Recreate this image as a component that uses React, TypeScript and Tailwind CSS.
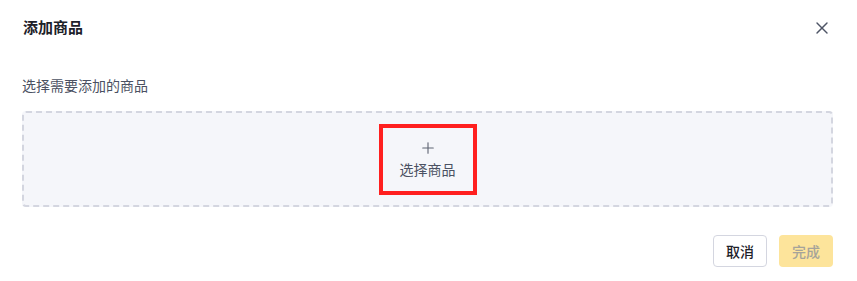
import { X, Plus } from "lucide-react"

const font = { fontFamily: '"Noto Sans CJK SC", "Noto Sans", sans-serif' }

export default function App() {
  return (
    <div className="w-[857px] h-[281px] bg-white text-[#1f2329] flex flex-col" style={font}>
      {/* header */}
      <div className="flex items-center justify-between pl-[23px] pr-[25px] h-[55px]">
        <h2 className="text-[15px] font-bold text-[#1d2129]">添加商品</h2>
        <button className="text-[#4e5566]">
          <X size={20} strokeWidth={1.7} />
        </button>
      </div>

      {/* body */}
      <div className="pl-[22px] pr-[24px] pt-[20px]">
        <p className="text-[14px] text-[#4b5162] leading-[20px]">选择需要添加的商品</p>
        <div className="mt-[16px] h-[96px] rounded-[4px] border-2 border-dashed border-[#d4d6e0] bg-[#f5f6fa] flex items-center justify-center">
          <div className="w-[98px] h-[71px] border-[4px] border-[#ff1f1f] flex flex-col items-center justify-center gap-[2px] text-[#4b5162]">
            <Plus size={18} strokeWidth={1.5} className="text-[#5f6473]" />
            <span className="text-[14px] leading-[20px]">选择商品</span>
          </div>
        </div>
      </div>

      {/* footer */}
      <div className="flex justify-end gap-[12px] pr-[24px] mt-[28px]">
        <button className="w-[54px] h-[32px] rounded-[4px] border border-[#d4d6e0] bg-white text-[14px] font-medium text-[#1d2129]">
          取消
        </button>
        <button className="w-[54px] h-[32px] rounded-[4px] bg-[#fde49b] text-[14px] font-medium text-[#a6a39a]">
          完成
        </button>
      </div>
    </div>
  )
}
